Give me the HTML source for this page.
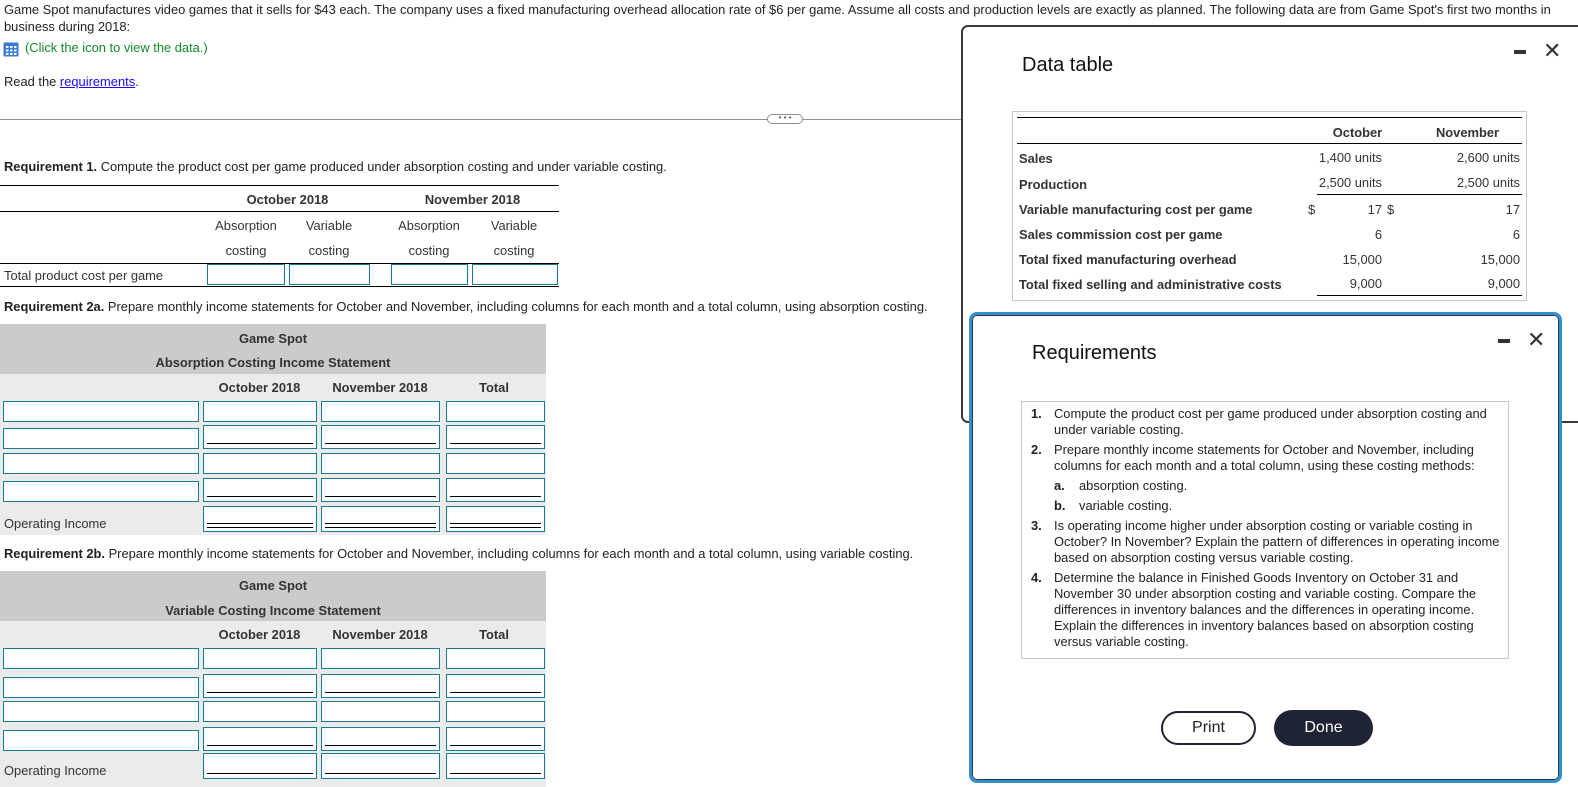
<!DOCTYPE html>
<html><head><meta charset="utf-8"><style>
*{margin:0;padding:0;box-sizing:border-box}
body{width:1578px;height:787px;overflow:hidden;background:#fff;font-family:"Liberation Sans",Arial,sans-serif;font-size:12.9px;color:#222;position:relative}
.a{position:absolute;white-space:nowrap}
.in{position:absolute;border:1px solid #1a7a94;background:#fff}
.ul::after{content:"";position:absolute;left:3px;right:3px;bottom:4px;border-top:1px solid #000}
.dul::after{content:"";position:absolute;left:3px;right:3px;bottom:3px;height:3px;border-top:1px solid #000;border-bottom:1px solid #000}
.b{font-weight:bold}
.c{text-align:center}
.hd{color:#333}
.line{position:absolute;border-top:1px solid #000}
</style></head><body>
<div class="a" style="left:4px;top:2px">Game Spot manufactures video games that it sells for $43 each. The company uses a fixed manufacturing overhead allocation rate of $6 per game. Assume all costs and production levels are exactly as planned. The following data are from Game Spot's first two months in</div>
<div class="a" style="left:4px;top:19px">business during 2018:</div>
<svg class="a" style="left:3px;top:42px" width="16" height="15" viewBox="0 0 16 15"><rect x="0.5" y="0.5" width="15" height="14" fill="#3a7bd5" rx="1"/><g fill="#fff"><rect x="3" y="4" width="2.5" height="2"/><rect x="7" y="4" width="2.5" height="2"/><rect x="11" y="4" width="2.5" height="2"/><rect x="3" y="7.5" width="2.5" height="2"/><rect x="7" y="7.5" width="2.5" height="2"/><rect x="11" y="7.5" width="2.5" height="2"/><rect x="3" y="11" width="2.5" height="2"/><rect x="7" y="11" width="2.5" height="2"/><rect x="11" y="11" width="2.5" height="2"/></g></svg>
<div class="a" style="left:25px;top:40px;color:#138a2c">(Click the icon to view the data.)</div>
<div class="a" style="left:4px;top:74px">Read the <span style="color:#1a0dff;text-decoration:underline">requirements</span>.</div>
<div class="a" style="left:0;top:119px;width:962px;border-top:1px solid #8a8f99"></div>
<div class="a" style="left:767px;top:114px;width:36px;height:10px;border:1px solid #8a8f99;border-radius:5px;background:#fff;font-size:8px;line-height:6px;text-align:center;color:#555">• • •</div>

<div class="a" style="left:4px;top:159px"><b>Requirement 1.</b> Compute the product cost per game produced under absorption costing and under variable costing.</div>
<div class="line" style="left:0;top:185px;width:559px"></div>
<div class="a b hd c" style="left:200px;top:192px;width:175px">October 2018</div>
<div class="a b hd c" style="left:385px;top:192px;width:175px">November 2018</div>
<div class="line" style="left:0;top:211px;width:559px"></div>
<div class="a hd c" style="left:206px;top:218px;width:80px">Absorption</div>
<div class="a hd c" style="left:289px;top:218px;width:80px">Variable</div>
<div class="a hd c" style="left:389px;top:218px;width:80px">Absorption</div>
<div class="a hd c" style="left:474px;top:218px;width:80px">Variable</div>
<div class="a hd c" style="left:206px;top:243px;width:80px">costing</div>
<div class="a hd c" style="left:289px;top:243px;width:80px">costing</div>
<div class="a hd c" style="left:389px;top:243px;width:80px">costing</div>
<div class="a hd c" style="left:474px;top:243px;width:80px">costing</div>
<div class="line" style="left:0;top:263px;width:559px"></div>
<div class="a hd" style="left:4px;top:268px">Total product cost per game</div>
<div class="in" style="left:207px;top:264px;width:78px;height:21px"></div>
<div class="in" style="left:289px;top:264px;width:81px;height:21px"></div>
<div class="in" style="left:391px;top:264px;width:77px;height:21px"></div>
<div class="in" style="left:472px;top:264px;width:86px;height:21px"></div>
<div class="line" style="left:0;top:286px;width:559px"></div>

<div class="a" style="left:4px;top:299px"><b>Requirement 2a.</b> Prepare monthly income statements for October and November, including columns for each month and a total column, using absorption costing.</div>
<div class="a" style="left:0;top:324px;width:546px;height:50px;background:#cbcbcb"></div>
<div class="a" style="left:0;top:374px;width:546px;height:161px;background:#ebebeb"></div>
<div class="a b hd c" style="left:0;top:331px;width:546px">Game Spot</div>
<div class="a b hd c" style="left:0;top:355px;width:546px">Absorption Costing Income Statement</div>
<div class="a b hd c" style="left:203px;top:380px;width:113px">October 2018</div>
<div class="a b hd c" style="left:321px;top:380px;width:118px">November 2018</div>
<div class="a b hd c" style="left:444px;top:380px;width:100px">Total</div>

<div class="a" style="left:0;top:571px;width:546px;height:50px;background:#cbcbcb"></div>
<div class="a" style="left:0;top:621px;width:546px;height:166px;background:#ebebeb"></div>
<div class="a" style="left:4px;top:546px"><b>Requirement 2b.</b> Prepare monthly income statements for October and November, including columns for each month and a total column, using variable costing.</div>
<div class="a b hd c" style="left:0;top:578px;width:546px">Game Spot</div>
<div class="a b hd c" style="left:0;top:603px;width:546px">Variable Costing Income Statement</div>
<div class="a b hd c" style="left:203px;top:627px;width:113px">October 2018</div>
<div class="a b hd c" style="left:321px;top:627px;width:118px">November 2018</div>
<div class="a b hd c" style="left:444px;top:627px;width:100px">Total</div>

<div class="in" style="left:3px;top:401px;width:196px;height:21px"></div>
<div class="in" style="left:203px;top:401px;width:114px;height:21px"></div>
<div class="in" style="left:321px;top:401px;width:119px;height:21px"></div>
<div class="in" style="left:446px;top:401px;width:99px;height:21px"></div>
<div class="in" style="left:3px;top:428px;width:196px;height:21px"></div>
<div class="in ul" style="left:203px;top:425px;width:114px;height:24px"></div>
<div class="in ul" style="left:321px;top:425px;width:119px;height:24px"></div>
<div class="in ul" style="left:446px;top:425px;width:99px;height:24px"></div>
<div class="in" style="left:3px;top:453px;width:196px;height:21px"></div>
<div class="in" style="left:203px;top:453px;width:114px;height:21px"></div>
<div class="in" style="left:321px;top:453px;width:119px;height:21px"></div>
<div class="in" style="left:446px;top:453px;width:99px;height:21px"></div>
<div class="in" style="left:3px;top:481px;width:196px;height:21px"></div>
<div class="in ul" style="left:203px;top:478px;width:114px;height:24px"></div>
<div class="in ul" style="left:321px;top:478px;width:119px;height:24px"></div>
<div class="in ul" style="left:446px;top:478px;width:99px;height:24px"></div>
<div class="a hd" style="left:4px;top:516px">Operating Income</div>
<div class="in dul" style="left:203px;top:506px;width:114px;height:26px"></div>
<div class="in dul" style="left:321px;top:506px;width:119px;height:26px"></div>
<div class="in dul" style="left:446px;top:506px;width:99px;height:26px"></div>

<div class="in" style="left:3px;top:648px;width:196px;height:21px"></div>
<div class="in" style="left:203px;top:648px;width:114px;height:21px"></div>
<div class="in" style="left:321px;top:648px;width:119px;height:21px"></div>
<div class="in" style="left:446px;top:648px;width:99px;height:21px"></div>
<div class="in" style="left:3px;top:677px;width:196px;height:21px"></div>
<div class="in ul" style="left:203px;top:674px;width:114px;height:24px"></div>
<div class="in ul" style="left:321px;top:674px;width:119px;height:24px"></div>
<div class="in ul" style="left:446px;top:674px;width:99px;height:24px"></div>
<div class="in" style="left:3px;top:701px;width:196px;height:21px"></div>
<div class="in" style="left:203px;top:701px;width:114px;height:21px"></div>
<div class="in" style="left:321px;top:701px;width:119px;height:21px"></div>
<div class="in" style="left:446px;top:701px;width:99px;height:21px"></div>
<div class="in" style="left:3px;top:730px;width:196px;height:21px"></div>
<div class="in ul" style="left:203px;top:727px;width:114px;height:24px"></div>
<div class="in ul" style="left:321px;top:727px;width:119px;height:24px"></div>
<div class="in ul" style="left:446px;top:727px;width:99px;height:24px"></div>
<div class="a hd" style="left:4px;top:763px">Operating Income</div>
<div class="in ul" style="left:203px;top:753px;width:114px;height:26px"></div>
<div class="in ul" style="left:321px;top:753px;width:119px;height:26px"></div>
<div class="in ul" style="left:446px;top:753px;width:99px;height:26px"></div>

<div class="a" style="left:961px;top:25px;width:640px;height:398px;border:2px solid #3a3a3a;border-radius:7px;background:#fff"></div>
<div class="a" style="left:1022px;top:54px;font-size:20px;color:#111">Data table</div>
<div class="a" style="left:1514px;top:50px;width:12px;height:4px;background:#333"></div>
<div class="a" style="left:1543px;top:38px;font-size:22px;color:#333">✕</div>
<div class="a" style="left:1012px;top:111px;width:515px;height:190px;border:1px solid #c8c8c8"></div>
<div class="line" style="left:1017px;top:117px;width:505px"></div>
<div class="a b hd c" style="left:1320px;top:125px;width:75px">October</div>
<div class="a b hd c" style="left:1425px;top:125px;width:85px">November</div>
<div class="line" style="left:1017px;top:143px;width:505px"></div>
<div class="line" style="left:1317px;top:194px;width:205px"></div>
<div class="line" style="left:1317px;top:295px;width:205px"></div>
<div class="a b hd" style="left:1019px;top:151px">Sales</div>
<div class="a b hd" style="left:1019px;top:177px">Production</div>
<div class="a b hd" style="left:1019px;top:202px">Variable manufacturing cost per game</div>
<div class="a b hd" style="left:1019px;top:227px">Sales commission cost per game</div>
<div class="a b hd" style="left:1019px;top:252px">Total fixed manufacturing overhead</div>
<div class="a b hd" style="left:1019px;top:277px">Total fixed selling and administrative costs</div>
<div class="a hd" style="left:1308px;top:202px">$</div>
<div class="a hd" style="left:1387px;top:202px">$</div>
<div class="a hd" style="right:196px;top:150px">1,400 units</div>
<div class="a hd" style="right:196px;top:175px">2,500 units</div>
<div class="a hd" style="right:196px;top:202px">17</div>
<div class="a hd" style="right:196px;top:227px">6</div>
<div class="a hd" style="right:196px;top:252px">15,000</div>
<div class="a hd" style="right:196px;top:276px">9,000</div>
<div class="a hd" style="right:58px;top:150px">2,600 units</div>
<div class="a hd" style="right:58px;top:175px">2,500 units</div>
<div class="a hd" style="right:58px;top:202px">17</div>
<div class="a hd" style="right:58px;top:227px">6</div>
<div class="a hd" style="right:58px;top:252px">15,000</div>
<div class="a hd" style="right:58px;top:276px">9,000</div>

<div class="a" style="left:969px;top:312px;width:593px;height:471px;border:3px solid #2f8fd0;border-radius:8px;background:#fff;box-shadow:inset 0 0 0 1px #333"></div>
<div class="a" style="left:1032px;top:342px;font-size:20px;color:#111">Requirements</div>
<div class="a" style="left:1498px;top:339px;width:12px;height:4px;background:#333"></div>
<div class="a" style="left:1527px;top:327px;font-size:22px;color:#333">✕</div>
<div class="a" style="left:1021px;top:401px;width:488px;height:258px;border:1px solid #c8c8c8"></div>
<div class="a" style="left:1031px;top:406px;line-height:16px;font-size:12.9px;color:#222;white-space:normal;width:476px">
<div style="position:relative;padding-left:23px"><b style="position:absolute;left:0">1.</b>Compute the product cost per game produced under absorption costing and<br>under variable costing.</div>
<div style="position:relative;padding-left:23px;margin-top:4px"><b style="position:absolute;left:0">2.</b>Prepare monthly income statements for October and November, including<br>columns for each month and a total column, using these costing methods:</div>
<div style="position:relative;padding-left:48px;margin-top:4px"><b style="position:absolute;left:23px">a.</b>absorption costing.</div>
<div style="position:relative;padding-left:48px;margin-top:4px"><b style="position:absolute;left:23px">b.</b>variable costing.</div>
<div style="position:relative;padding-left:23px;margin-top:4px"><b style="position:absolute;left:0">3.</b>Is operating income higher under absorption costing or variable costing in<br>October? In November? Explain the pattern of differences in operating income<br>based on absorption costing versus variable costing.</div>
<div style="position:relative;padding-left:23px;margin-top:4px"><b style="position:absolute;left:0">4.</b>Determine the balance in Finished Goods Inventory on October 31 and<br>November 30 under absorption costing and variable costing. Compare the<br>differences in inventory balances and the differences in operating income.<br>Explain the differences in inventory balances based on absorption costing<br>versus variable costing.</div>
</div>
<div class="a c" style="left:1161px;top:711px;width:95px;height:34px;border:2px solid #1e2433;border-radius:17px;font-size:16px;line-height:30px;color:#222">Print</div>
<div class="a c" style="left:1274px;top:710px;width:99px;height:36px;background:#1e2433;border-radius:18px;font-size:16px;line-height:36px;color:#fff">Done</div>
</body></html>
